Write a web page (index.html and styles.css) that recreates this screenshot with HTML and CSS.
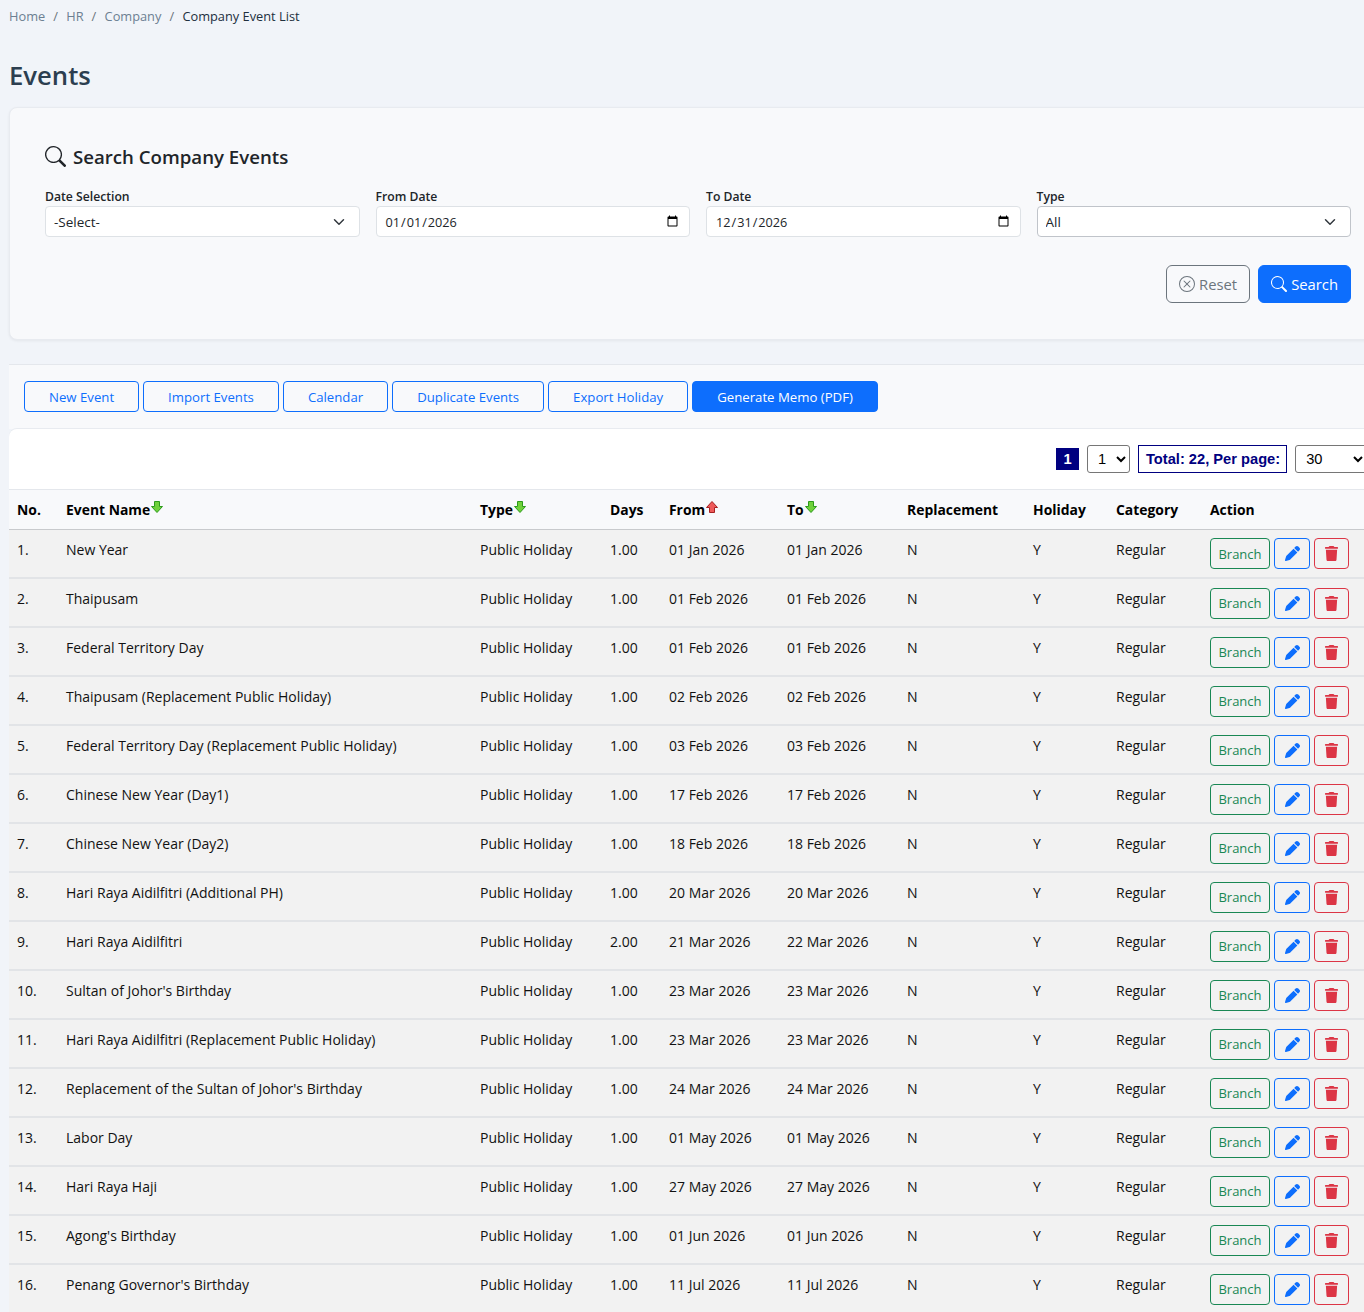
FILE: index.html
```html
<!DOCTYPE html>
<html lang="en">
<head>
  <meta charset="UTF-8">
  <title>Company Event List</title>
  <link rel="stylesheet" href="styles.css">
</head>
<body>

<svg class="defs" width="0" height="0">
  <symbol id="i-search" viewBox="0 0 16 16"><path fill="currentColor" d="M11.742 10.344a6.5 6.5 0 1 0-1.397 1.398h-.001q.044.06.098.115l3.85 3.85a1 1 0 0 0 1.415-1.414l-3.85-3.85a1 1 0 0 0-.115-.1zM12 6.5a5.5 5.5 0 1 1-11 0 5.5 5.5 0 0 1 11 0"/></symbol>
  <symbol id="i-reset" viewBox="0 0 16 16"><path fill="currentColor" d="M8 15A7 7 0 1 1 8 1a7 7 0 0 1 0 14m0 1A8 8 0 1 0 8 0a8 8 0 0 0 0 16"/><path fill="currentColor" d="M4.646 4.646a.5.5 0 0 1 .708 0L8 7.293l2.646-2.647a.5.5 0 0 1 .708.708L8.707 8l2.647 2.646a.5.5 0 0 1-.708.708L8 8.707l-2.646 2.647a.5.5 0 0 1-.708-.708L7.293 8 4.646 5.354a.5.5 0 0 1 0-.708"/></symbol>
  <symbol id="i-pen" viewBox="0 0 512 512"><path fill="currentColor" d="M362.7 19.3 314.3 67.7l130 130 48.4-48.4c25-25 25-65.5 0-90.5l-39.4-39.5c-25-25-65.5-25-90.5 0zM291.7 90.3 58.6 323.5c-10.4 10.4-18 23.3-22.2 37.4L1 481.2c-2.500 8.500-.2 17.600 6 23.800s15.300 8.500 23.700 6.100l120.300-35.400c14.100-4.200 27-11.800 37.400-22.200L421.700 220.300z"/></symbol>
  <symbol id="i-trash" viewBox="0 0 448 512"><path fill="currentColor" d="M135.200 17.700 128 32H32C14.300 32 0 46.300 0 64s14.300 32 32 32h384c17.700 0 32-14.300 32-32s-14.300-32-32-32h-96l-7.200-14.300C307.400 6.800 296.300 0 284.200 0H163.800c-12.100 0-23.200 6.800-28.600 17.700zM416 128H32l21.200 339c1.600 25.300 22.600 45 47.900 45h245.800c25.300 0 46.300-19.700 47.900-45z"/></symbol>
  <symbol id="i-down" viewBox="0 0 12 12"><path fill="#6fd13a" stroke="#2c9a1c" d="M3.500.5h5v5h3L6 11.500.5 5.500h3z"/></symbol>
  <symbol id="i-up" viewBox="0 0 12 12"><path fill="#ee5a5a" stroke="#a52020" d="M6 .5l5.500 6h-3v5h-5v-5h-3z"/></symbol>
</svg>

<nav class="crumbs">
  <a href="#">Home</a><span class="sep">/</span>
  <a href="#">HR</a><span class="sep">/</span>
  <a href="#">Company</a><span class="sep">/</span>
  <span class="current">Company Event List</span>
</nav>

<h1 class="page-title">Events</h1>

<section class="search-card">
  <h2 class="search-title"><svg class="search-icon"><use href="#i-search"/></svg>Search Company Events</h2>
  <div class="search-fields">
    <label class="field">Date Selection
      <select class="input pick"><option>-Select-</option></select>
    </label>
    <label class="field">From Date
      <input class="input date" type="date" value="2026-01-01">
    </label>
    <label class="field">To Date
      <input class="input date" type="date" value="2026-12-31">
    </label>
    <label class="field">Type
      <select class="input pick dark"><option>All</option></select>
    </label>
  </div>
  <div class="search-actions">
    <button class="btn btn-reset"><svg class="btn-icon"><use href="#i-reset"/></svg>Reset</button>
    <button class="btn btn-search"><svg class="btn-icon"><use href="#i-search"/></svg>Search</button>
  </div>
</section>

<div class="action-bar">
  <button class="tool">New Event</button>
  <button class="tool">Import Events</button>
  <button class="tool">Calendar</button>
  <button class="tool">Duplicate Events</button>
  <button class="tool">Export Holiday</button>
  <button class="tool tool-main">Generate Memo (PDF)</button>
</div>

<section class="list-card">
  <div class="pager">
    <span class="page-no">1</span>
    <select class="page-pick"><option>1</option></select>
    <span class="page-total">Total: 22, Per page:</span>
    <select class="page-size"><option>30</option></select>
  </div>

  <table class="events">
    <colgroup>
      <col class="c-no"><col class="c-name"><col class="c-type"><col class="c-days"><col class="c-from"><col class="c-to"><col class="c-rep"><col class="c-hol"><col class="c-cat"><col class="c-act">
    </colgroup>
    <thead>
      <tr>
        <th>No.</th>
        <th>Event Name<svg class="sort"><use href="#i-down"/></svg></th>
        <th>Type<svg class="sort"><use href="#i-down"/></svg></th>
        <th>Days</th>
        <th>From<svg class="sort"><use href="#i-up"/></svg></th>
        <th>To<svg class="sort"><use href="#i-down"/></svg></th>
        <th>Replacement</th>
        <th>Holiday</th>
        <th>Category</th>
        <th>Action</th>
      </tr>
    </thead>
    <tbody id="rows">
      <tr><td>1.</td><td>New Year</td><td>Public Holiday</td><td>1.00</td><td>01 Jan 2026</td><td>01 Jan 2026</td><td>N</td><td>Y</td><td>Regular</td><td class="act-cell"><div class="acts"><a class="act act-branch">Branch</a><a class="act act-edit"><svg><use href="#i-pen"/></svg></a><a class="act act-del"><svg><use href="#i-trash"/></svg></a></div></td></tr>
      <tr><td>2.</td><td>Thaipusam</td><td>Public Holiday</td><td>1.00</td><td>01 Feb 2026</td><td>01 Feb 2026</td><td>N</td><td>Y</td><td>Regular</td><td class="act-cell"><div class="acts"><a class="act act-branch">Branch</a><a class="act act-edit"><svg><use href="#i-pen"/></svg></a><a class="act act-del"><svg><use href="#i-trash"/></svg></a></div></td></tr>
      <tr><td>3.</td><td>Federal Territory Day</td><td>Public Holiday</td><td>1.00</td><td>01 Feb 2026</td><td>01 Feb 2026</td><td>N</td><td>Y</td><td>Regular</td><td class="act-cell"><div class="acts"><a class="act act-branch">Branch</a><a class="act act-edit"><svg><use href="#i-pen"/></svg></a><a class="act act-del"><svg><use href="#i-trash"/></svg></a></div></td></tr>
      <tr><td>4.</td><td>Thaipusam (Replacement Public Holiday)</td><td>Public Holiday</td><td>1.00</td><td>02 Feb 2026</td><td>02 Feb 2026</td><td>N</td><td>Y</td><td>Regular</td><td class="act-cell"><div class="acts"><a class="act act-branch">Branch</a><a class="act act-edit"><svg><use href="#i-pen"/></svg></a><a class="act act-del"><svg><use href="#i-trash"/></svg></a></div></td></tr>
      <tr><td>5.</td><td>Federal Territory Day (Replacement Public Holiday)</td><td>Public Holiday</td><td>1.00</td><td>03 Feb 2026</td><td>03 Feb 2026</td><td>N</td><td>Y</td><td>Regular</td><td class="act-cell"><div class="acts"><a class="act act-branch">Branch</a><a class="act act-edit"><svg><use href="#i-pen"/></svg></a><a class="act act-del"><svg><use href="#i-trash"/></svg></a></div></td></tr>
      <tr><td>6.</td><td>Chinese New Year (Day1)</td><td>Public Holiday</td><td>1.00</td><td>17 Feb 2026</td><td>17 Feb 2026</td><td>N</td><td>Y</td><td>Regular</td><td class="act-cell"><div class="acts"><a class="act act-branch">Branch</a><a class="act act-edit"><svg><use href="#i-pen"/></svg></a><a class="act act-del"><svg><use href="#i-trash"/></svg></a></div></td></tr>
      <tr><td>7.</td><td>Chinese New Year (Day2)</td><td>Public Holiday</td><td>1.00</td><td>18 Feb 2026</td><td>18 Feb 2026</td><td>N</td><td>Y</td><td>Regular</td><td class="act-cell"><div class="acts"><a class="act act-branch">Branch</a><a class="act act-edit"><svg><use href="#i-pen"/></svg></a><a class="act act-del"><svg><use href="#i-trash"/></svg></a></div></td></tr>
      <tr><td>8.</td><td>Hari Raya Aidilfitri (Additional PH)</td><td>Public Holiday</td><td>1.00</td><td>20 Mar 2026</td><td>20 Mar 2026</td><td>N</td><td>Y</td><td>Regular</td><td class="act-cell"><div class="acts"><a class="act act-branch">Branch</a><a class="act act-edit"><svg><use href="#i-pen"/></svg></a><a class="act act-del"><svg><use href="#i-trash"/></svg></a></div></td></tr>
      <tr><td>9.</td><td>Hari Raya Aidilfitri</td><td>Public Holiday</td><td>2.00</td><td>21 Mar 2026</td><td>22 Mar 2026</td><td>N</td><td>Y</td><td>Regular</td><td class="act-cell"><div class="acts"><a class="act act-branch">Branch</a><a class="act act-edit"><svg><use href="#i-pen"/></svg></a><a class="act act-del"><svg><use href="#i-trash"/></svg></a></div></td></tr>
      <tr><td>10.</td><td>Sultan of Johor's Birthday</td><td>Public Holiday</td><td>1.00</td><td>23 Mar 2026</td><td>23 Mar 2026</td><td>N</td><td>Y</td><td>Regular</td><td class="act-cell"><div class="acts"><a class="act act-branch">Branch</a><a class="act act-edit"><svg><use href="#i-pen"/></svg></a><a class="act act-del"><svg><use href="#i-trash"/></svg></a></div></td></tr>
      <tr><td>11.</td><td>Hari Raya Aidilfitri (Replacement Public Holiday)</td><td>Public Holiday</td><td>1.00</td><td>23 Mar 2026</td><td>23 Mar 2026</td><td>N</td><td>Y</td><td>Regular</td><td class="act-cell"><div class="acts"><a class="act act-branch">Branch</a><a class="act act-edit"><svg><use href="#i-pen"/></svg></a><a class="act act-del"><svg><use href="#i-trash"/></svg></a></div></td></tr>
      <tr><td>12.</td><td>Replacement of the Sultan of Johor's Birthday</td><td>Public Holiday</td><td>1.00</td><td>24 Mar 2026</td><td>24 Mar 2026</td><td>N</td><td>Y</td><td>Regular</td><td class="act-cell"><div class="acts"><a class="act act-branch">Branch</a><a class="act act-edit"><svg><use href="#i-pen"/></svg></a><a class="act act-del"><svg><use href="#i-trash"/></svg></a></div></td></tr>
      <tr><td>13.</td><td>Labor Day</td><td>Public Holiday</td><td>1.00</td><td>01 May 2026</td><td>01 May 2026</td><td>N</td><td>Y</td><td>Regular</td><td class="act-cell"><div class="acts"><a class="act act-branch">Branch</a><a class="act act-edit"><svg><use href="#i-pen"/></svg></a><a class="act act-del"><svg><use href="#i-trash"/></svg></a></div></td></tr>
      <tr><td>14.</td><td>Hari Raya Haji</td><td>Public Holiday</td><td>1.00</td><td>27 May 2026</td><td>27 May 2026</td><td>N</td><td>Y</td><td>Regular</td><td class="act-cell"><div class="acts"><a class="act act-branch">Branch</a><a class="act act-edit"><svg><use href="#i-pen"/></svg></a><a class="act act-del"><svg><use href="#i-trash"/></svg></a></div></td></tr>
      <tr><td>15.</td><td>Agong's Birthday</td><td>Public Holiday</td><td>1.00</td><td>01 Jun 2026</td><td>01 Jun 2026</td><td>N</td><td>Y</td><td>Regular</td><td class="act-cell"><div class="acts"><a class="act act-branch">Branch</a><a class="act act-edit"><svg><use href="#i-pen"/></svg></a><a class="act act-del"><svg><use href="#i-trash"/></svg></a></div></td></tr>
      <tr><td>16.</td><td>Penang Governor's Birthday</td><td>Public Holiday</td><td>1.00</td><td>11 Jul 2026</td><td>11 Jul 2026</td><td>N</td><td>Y</td><td>Regular</td><td class="act-cell"><div class="acts"><a class="act act-branch">Branch</a><a class="act act-edit"><svg><use href="#i-pen"/></svg></a><a class="act act-del"><svg><use href="#i-trash"/></svg></a></div></td></tr>
    </tbody>
  </table>
</section>

</body>
</html>
```

FILE: styles.css
```css
html, body {
  height: 1312px;
  overflow: hidden;
}
body {
  margin: 0;
  width: 1388px;
  padding-left: 9px;
  box-sizing: border-box;
  background: #f1f4f9;
  color: #212529;
  font-family: "Open Sans", sans-serif;
  font-size: 13.5px;
}
.defs {
  position: absolute;
}

.crumbs {
  height: 33px;
  line-height: 33px;
  font-size: 12.8px;
  color: #212f3e;
}
.crumbs a {
  color: #6c7f92;
  text-decoration: none;
}
.sep {
  margin: 0 5px 0 8px;
  color: #6c757d;
}
.page-title {
  margin: 0;
  padding-top: 23px;
  height: 74px;
  box-sizing: border-box;
  line-height: 40px;
  font-size: 25.700px;
  font-weight: 600;
  color: #2c3e50;
}

.search-card {
  height: 233px;
  box-sizing: border-box;
  padding: 32px 36px 0 35px;
  background: #f8f9fb;
  border: 1px solid #e8ebf0;
  border-radius: 8px;
  box-shadow: 0 1px 3px rgba(0,0,0,0.06);
}
.search-title {
  display: flex;
  align-items: center;
  margin: 0 0 17px;
  height: 32px;
  font-size: 18.650px;
  font-weight: 600;
  color: #212529;
}
.search-icon {
  width: 21px;
  height: 21px;
  margin-right: 7px;
}
.search-fields {
  display: grid;
  grid-template-columns: repeat(4, 1fr);
  gap: 16px;
}
.field {
  display: block;
  font-size: 12.2px;
  font-weight: 600;
  line-height: 16px;
}
.input {
  display: block;
  width: 100%;
  height: 31px;
  margin-top: 1px;
  box-sizing: border-box;
  padding: 0 8px;
  border: 1px solid #dee2e6;
  border-radius: 4px;
  background-color: #fff;
  color: #212529;
  font-family: "Open Sans", sans-serif;
  font-size: 13.5px;
}
.date {
  font-size: 12.7px;
}
.pick {
  appearance: none;
  background-image: url("data:image/svg+xml,%3csvg xmlns='http://www.w3.org/2000/svg' viewBox='0 0 16 16'%3e%3cpath fill='none' stroke='%23343a40' stroke-linecap='round' stroke-linejoin='round' stroke-width='2' d='m2 5 6 6 6-6'/%3e%3c/svg%3e");
  background-repeat: no-repeat;
  background-position: right 14px center;
  background-size: 12px 12px;
}
.pick.dark {
  border-color: #c0c4ca;
}
.search-actions {
  display: flex;
  justify-content: flex-end;
  gap: 8px;
  margin-top: 28px;
}
.btn {
  display: flex;
  align-items: center;
  height: 38px;
  box-sizing: border-box;
  padding: 0 12px;
  border-radius: 6px;
  font-family: "Open Sans", sans-serif;
  font-size: 14.8px;
}
.btn-icon {
  width: 16px;
  height: 16px;
  margin-right: 4px;
}
.btn-reset {
  border: 1px solid #6c757d;
  background: transparent;
  color: #6c757d;
}
.btn-search {
  border: 1px solid #0d6efd;
  background: #0d6efd;
  color: #fff;
}

.action-bar {
  display: flex;
  gap: 4px;
  margin-top: 24px;
  height: 65px;
  box-sizing: border-box;
  padding: 16px 15px 0;
  background: #f8f9fb;
  border-top: 1px solid #e4e7ec;
}
.tool {
  height: 31px;
  padding: 0 24px;
  border: 1px solid #0d6efd;
  border-radius: 4px;
  background: transparent;
  color: #0d6efd;
  font-family: "Open Sans", sans-serif;
  font-size: 13.2px;
}
.tool-main {
  background: #0d6efd;
  color: #fff;
}

.list-card {
  background: #fff;
  border-radius: 8px 8px 0 0;
  box-shadow: 0 -1px 0 #e8ebf0;
}
.pager {
  display: flex;
  align-items: center;
  gap: 8px;
  height: 60px;
  padding-left: 1047px;
  font-family: "Liberation Sans", sans-serif;
  font-size: 14.67px;
}
.page-no {
  width: 23px;
  height: 22px;
  line-height: 22px;
  text-align: center;
  background: #000080;
  color: #fff;
  font-weight: 700;
}
.page-pick, .page-size {
  height: 28px;
  border: 1px solid #767676;
  border-radius: 3px;
  background: #fff;
  font-family: "Liberation Sans", sans-serif;
  font-size: 14.67px;
  padding-left: 6px;
}
.page-pick {
  width: 43px;
}
.page-size {
  width: 72px;
}
.page-total {
  height: 28px;
  box-sizing: border-box;
  line-height: 26px;
  padding: 0 6px 0 7px;
  border: 1px solid #000080;
  color: #000080;
  font-weight: 700;
}

.events {
  width: 1355px;
  table-layout: fixed;
  border-collapse: collapse;
  color: #111;
  font-size: 14px;
}
.c-no { width: 49px; }
.c-name { width: 414px; }
.c-type { width: 130px; }
.c-days { width: 59px; }
.c-from { width: 118px; }
.c-to { width: 120px; }
.c-rep { width: 126px; }
.c-hol { width: 83px; }
.c-cat { width: 94px; }
.events th {
  height: 40px;
  padding: 0 8px;
  box-sizing: border-box;
  text-align: left;
  font-size: 13.9px;
  font-weight: 700;
  color: #000;
  background: #f8f9fb;
  border-top: 1px solid #e4e7ec;
  border-bottom: 1px solid #c8cacd;
  white-space: nowrap;
}
.sort {
  width: 12px;
  height: 12px;
  vertical-align: 2px;
  margin-left: 1px;
}
.events td {
  height: 49px;
  padding: 11px 8px 0;
  box-sizing: border-box;
  vertical-align: top;
  line-height: 18px;
  background: #f2f2f2;
  border-bottom: 2px solid #e2e4e7;
  white-space: nowrap;
}
.events tbody tr:first-child td {
  height: 48px;
}
.events td.act-cell {
  padding-top: 9px;
}
.events tbody tr:first-child td.act-cell {
  padding-top: 8px;
}
.acts {
  display: flex;
  gap: 4px;
}
.act {
  display: flex;
  align-items: center;
  justify-content: center;
  height: 31px;
  box-sizing: border-box;
  border: 1px solid;
  border-radius: 4px;
  font-size: 13px;
}
.act svg {
  width: 15px;
  height: 15px;
}
.act-branch {
  width: 60px;
  border-color: #198754;
  color: #198754;
}
.act-edit {
  width: 36px;
  border-color: #0d6efd;
  color: #0d6efd;
}
.act-del {
  width: 35px;
  border-color: #dc3545;
  color: #dc3545;
}
```
